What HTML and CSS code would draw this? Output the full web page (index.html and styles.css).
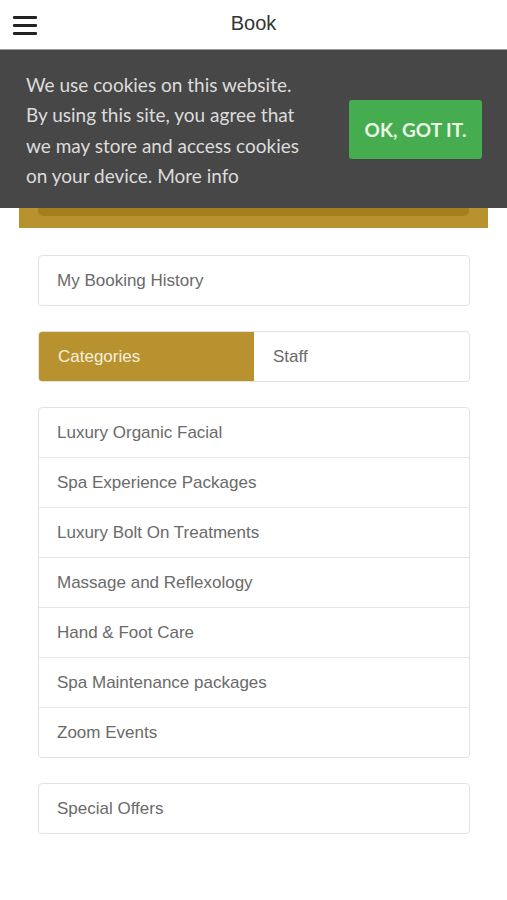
FILE: index.html
```html
<!DOCTYPE html>
<html lang="en">
<head>
    <meta charset="UTF-8">
    <meta name="viewport" content="width=device-width, initial-scale=1.0">
    <title>Book</title>
    <link rel="stylesheet" href="styles.css">
</head>
<body>
    <div class="topbar">
        <button class="menu-btn" type="button" aria-label="Menu">
            <span></span><span></span><span></span>
        </button>
        <div class="title">Book</div>
    </div>

    <div class="page">
        <div class="hero">
            <div class="hero-bar"></div>
        </div>

        <div class="content">
            <div class="box">
                <div class="row">My Booking History</div>
            </div>

            <div class="tabs">
                <div class="tab active">Categories</div>
                <div class="tab">Staff</div>
            </div>

            <div class="box">
                <div class="row">Luxury Organic Facial</div>
                <div class="row">Spa Experience Packages</div>
                <div class="row">Luxury Bolt On Treatments</div>
                <div class="row">Massage and Reflexology</div>
                <div class="row">Hand &amp; Foot Care</div>
                <div class="row">Spa Maintenance packages</div>
                <div class="row">Zoom Events</div>
            </div>

            <div class="box">
                <div class="row">Special Offers</div>
            </div>
        </div>
    </div>

    <div class="cookie-banner">
        <p>We use cookies on this website. By using this site, you agree that we may store and access cookies on your device. More info</p>
        <button type="button" class="cookie-btn">OK, GOT IT.</button>
    </div>
</body>
</html>
```

FILE: styles.css
```css
body {
    margin: 0;
    font-family: "Liberation Sans", Arial, sans-serif;
    background: #fff;
}
.topbar {
    height: 49px;
    border-bottom: 1px solid #9a9a9a;
    display: flex;
    align-items: center;
    justify-content: center;
    position: relative;
    background: #fff;
}
.menu-btn {
    position: absolute;
    left: 13px;
    top: 16px;
    width: 24px;
    height: 19px;
    padding: 0;
    border: none;
    background: none;
    display: flex;
    flex-direction: column;
    justify-content: space-between;
}
.menu-btn span {
    display: block;
    height: 3px;
    background: #222;
    border-radius: 1px;
}
.title {
    font-size: 20px;
    color: #333;
    margin-top: -3px;
}
.hero {
    margin: 0 19px;
    height: 178px;
    background: #b8922f;
    padding: 0 19px;
    display: flex;
    align-items: flex-end;
}
.hero-bar {
    flex: 1;
    height: 40px;
    margin-bottom: 12px;
    background: #a67e1c;
    border-radius: 0 0 5px 5px;
}
.content {
    padding: 27px 37px 40px 38px;
    display: flex;
    flex-direction: column;
    gap: 25px;
}
.box {
    border: 1px solid #e3e3e3;
    border-radius: 4px;
    background: #fff;
}
.row {
    height: 49px;
    line-height: 49px;
    padding-left: 18px;
    font-size: 17px;
    color: #6a6a6a;
    border-top: 1px solid #e6e6e6;
}
.row:first-child {
    border-top: none;
}
.tabs {
    display: flex;
    border: 1px solid #e3e3e3;
    border-radius: 4px;
    overflow: hidden;
}
.tab {
    flex: 1;
    height: 49px;
    line-height: 49px;
    padding-left: 19px;
    font-size: 17px;
    color: #6a6a6a;
}
.tab.active {
    background: #b8922f;
    color: #f6efdc;
}
.cookie-banner {
    position: fixed;
    top: 50px;
    left: 0;
    right: 0;
    height: 158px;
    background: #474747;
    display: flex;
    align-items: center;
    padding: 3px 25px 0 26px;
    box-sizing: border-box;
    font-family: Lato, "Open Sans", sans-serif;
}
.cookie-banner p {
    margin: 0;
    width: 290px;
    font-size: 19px;
    line-height: 30.5px;
    color: #dcdcdc;
}
.cookie-btn {
    margin-left: auto;
    margin-top: -3px;
    width: 133px;
    height: 59px;
    background: #45ad4f;
    color: #eaf5e8;
    border: none;
    border-radius: 3px;
    font-family: Lato, sans-serif;
    font-weight: bold;
    font-size: 19px;
}
```
